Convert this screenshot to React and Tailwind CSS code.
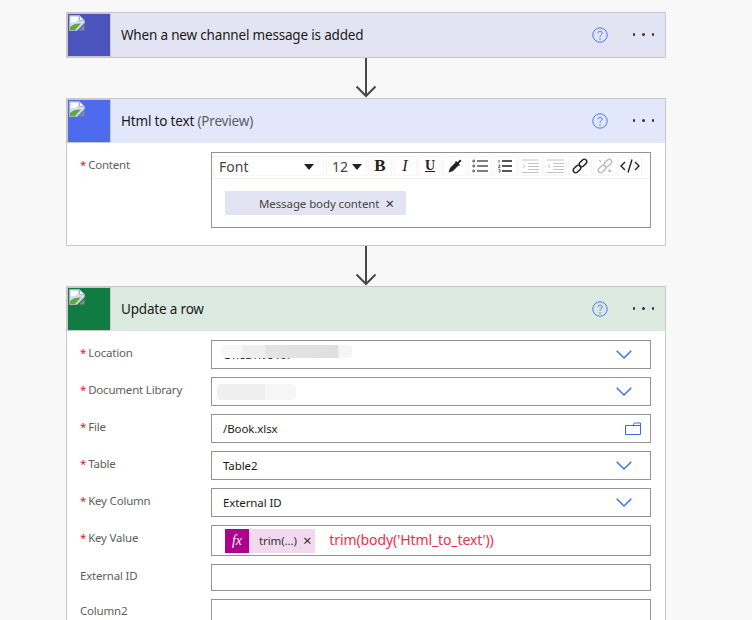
import React from "react";

const Broken = () => (
  <svg width="16" height="16" viewBox="0 0 16 16" className="absolute left-px top-px">
    <path d="M0.5 0.5H10.5L15.5 5.5V8L8 15.5H0.5Z" fill="#cfe0f5" stroke="#b0b0b0" />
    <path d="M10.5 0.5V5.5H15.5Z" fill="#fff" stroke="#b0b0b0" />
    <path d="M2 2h7v3.5H7V7H2z" fill="#fff" />
    <path d="M1 15V12C4 9 8 8 12 8.5L6 15Z" fill="#62a83c" />
    <path d="M10 15.5L15.5 10V15.5Z" fill="#8a8a8a" />
  </svg>
);

const Help = () => (
  <svg width="16" height="16" viewBox="0 0 16 16" fill="none">
    <circle cx="8" cy="8" r="7.2" stroke="#4d76f0" strokeWidth="1" />
    <path d="M5.9 6.2C5.9 3.6 10.2 3.6 10.2 6.1C10.2 7.8 8 7.7 8 9.8" stroke="#4d76f0" strokeWidth="1" />
    <circle cx="8" cy="12" r="0.8" fill="#4d76f0" />
  </svg>
);

const Dots = () => (
  <div className="flex gap-[7px]">
    <span className="w-[2.5px] h-[2.5px] bg-[#333] rounded-full" />
    <span className="w-[2.5px] h-[2.5px] bg-[#333] rounded-full" />
    <span className="w-[2.5px] h-[2.5px] bg-[#333] rounded-full" />
  </div>
);

const Header = ({ tile, bg, children }) => (
  <div className={`flex h-[44px] ${bg}`}>
    <div className="w-[44px] h-[44px] border border-[#c8c8c8] shrink-0">
      <div className={`relative w-[42px] h-[42px] ${tile}`}>
        <Broken />
      </div>
    </div>
    <div className="flex-1 pl-[10px] pt-[12px] text-[13.5px] leading-[20px] text-[#1b1a19] tracking-[-0.18px]">{children}</div>
    <div className="flex items-center h-[42px] pt-px">
      <Help />
      <div className="ml-[25px] mr-[11px] w-[21px]"><Dots /></div>
    </div>
  </div>
);

const Arrow = ({ h }) => (
  <div className="flex justify-center" style={{ height: h }}>
    <svg width="22" height={h} viewBox={`0 0 22 ${h}`} fill="none">
      <path d={`M11 0V${h - 3}M1.5 ${h - 11.5}L11 ${h - 2}L20.5 ${h - 11.5}`} stroke="#484848" strokeWidth="2" />
    </svg>
  </div>
);

const Chevron = () => (
  <svg width="16" height="9" viewBox="0 0 16 9" fill="none">
    <path d="M0.7 0.7L8 8L15.3 0.7" stroke="#3a6cf0" strokeWidth="1.4" />
  </svg>
);

const Folder = () => (
  <svg width="16" height="13" viewBox="0 0 16 13" fill="none">
    <path d="M0.5 12.5V3.5H8L9.5 1H15.5V12.5ZM8 3.5H15.5" stroke="#2f6cf0" strokeWidth="1" />
  </svg>
);

const Row = ({ label, req, h = "h-[29px]", children }) => (
  <div className="flex">
    <div className={`w-[144px] pl-[13px] ${req ? "pt-[4px]" : "pt-[3px]"} text-[11.5px] leading-[18px] text-[#605e5c] tracking-[-0.2px] shrink-0`}>
      {req && <span className="text-[#e8112d] mr-[2px]">*</span>}
      {label}
    </div>
    <div className={`relative w-[440px] ${h} border border-[#949494] bg-white flex items-center pl-[11px] pr-[18px] text-[11.5px] tracking-[-0.1px] text-[#1b1a19] overflow-hidden`}>
      {children}
    </div>
  </div>
);

const TB = ({ w = "w-[24px]", children }) => (
  <div className={`${w} h-[20px] rounded-[2px] border border-[#f6f6f6] flex items-center justify-center shrink-0`}>{children}</div>
);

const ic = { fill: "none", stroke: "#222", strokeWidth: 1.3 };

const Toolbar = () => (
  <div className="flex items-center gap-px h-[26px] pl-px border-b border-[#f1f1f1] text-[#444]">
    <div className="w-[111px] h-[20px] border border-[#f6f6f6] flex items-center justify-between pl-[5px] pr-[9px] text-[14px] leading-none pt-[2px] shrink-0">
      <span>Font</span>
      <span className="w-0 h-0 border-x-[5px] border-x-transparent border-t-[6px] border-t-[#222]" />
    </div>
    <div className="w-[41px] ml-px h-[20px] border border-[#f6f6f6] flex items-center justify-between pl-[5px] pr-[4px] text-[14px] leading-none pt-[2px] shrink-0">
      <span>12</span>
      <span className="w-0 h-0 border-x-[5px] border-x-transparent border-t-[6px] border-t-[#222]" />
    </div>
    <TB><span className="font-bold text-[17px] text-[#222] font-['Liberation_Serif',serif]">B</span></TB>
    <TB><span className="italic text-[16px] text-[#222] font-['Liberation_Serif',serif]">I</span></TB>
    <TB><span className="underline text-[14px] font-semibold text-[#222] font-['Liberation_Serif',serif]">U</span></TB>
    <TB>
      <svg width="14" height="14" viewBox="0 0 14 14"><path d="M0.5 13.5L2 9L8 3L11 6L5 12Z" fill="#222" /><path d="M8 2L9.5 3.2L11.5 1C12.5 0.2 13.8 1.5 13 2.5L10.8 4.5L12 6L11 7L7 3Z" fill="#222" /></svg>
    </TB>
    <TB>
      <svg width="16" height="14" viewBox="0 0 16 14" {...ic}>
        <circle cx="1.7" cy="2" r="1" strokeWidth="0.8" /><circle cx="1.7" cy="7" r="1" strokeWidth="0.8" /><circle cx="1.7" cy="12" r="1" strokeWidth="0.8" />
        <path d="M5 2H16M5 7H16M5 12H16" stroke="#555" />
      </svg>
    </TB>
    <TB>
      <svg width="14" height="14" viewBox="0 0 14 14" {...ic}>
        <path d="M1 1V3.5M0.5 6H2L0.5 8.5H2.2M0.5 10.5H2V13H0.5" strokeWidth="0.7" />
        <path d="M4 2H14M4 7H14M4 12H14" strokeWidth="1.4" />
      </svg>
    </TB>
    <TB>
      <svg width="17" height="14" viewBox="0 0 17 14" fill="none" stroke="#c4c4c4">
        <path d="M0 1H17M6 4.5H17M6 7.5H17M6 10.5H17M0 13.5H17" /><path d="M1 5.5L3 7.2L1 9" />
      </svg>
    </TB>
    <TB>
      <svg width="17" height="14" viewBox="0 0 17 14" fill="none" stroke="#c4c4c4">
        <path d="M0 1H17M6 4.5H17M6 7.5H17M6 10.5H17M0 13.5H17" /><path d="M3 5.5L1 7.2L3 9" />
      </svg>
    </TB>
    <TB>
      <svg width="16" height="16" viewBox="0 0 16 16" fill="none" stroke="#222" strokeWidth="1.2">
        <rect x="-3.5" y="-2" width="7" height="4" rx="2" transform="translate(5 11) rotate(-45) scale(1.25)" />
        <rect x="-3.5" y="-2" width="7" height="4" rx="2" transform="translate(11 5) rotate(-45) scale(1.25)" />
      </svg>
    </TB>
    <TB>
      <svg width="16" height="16" viewBox="0 0 16 16" fill="none" stroke="#bdbdbd" strokeWidth="1.2">
        <rect x="-3.5" y="-2" width="7" height="4" rx="2" transform="translate(5 11) rotate(-45) scale(1.25)" />
        <rect x="-3.5" y="-2" width="7" height="4" rx="2" transform="translate(11 5) rotate(-45) scale(1.25)" />
        <path d="M2 2L4 4M12 12L14 14M12 14V12H14" />
      </svg>
    </TB>
    <TB>
      <svg width="20" height="14" viewBox="0 0 20 14" fill="none" stroke="#222" strokeWidth="1.4">
        <path d="M5 3L1 7L5 11M15 3L19 7L15 11M12 0.5L8 13.5" />
      </svg>
    </TB>
  </div>
);

export default function App() {
  return (
    <div className="w-[752px] h-[620px] overflow-hidden bg-[#f8f8f8] pt-[12px] pl-[66px] font-['Noto_Sans','Open_Sans',sans-serif]">
      <div className="w-[600px]">
        <div className="border border-[#c8c8c8] bg-[#e3e4f3]">
          <Header tile="bg-[#4b53bc]" bg="bg-[#e3e4f3]">When a new channel message is added</Header>
        </div>
        <Arrow h={40} />
        <div className="border border-[#c8c8c8] bg-white h-[148px]">
          <Header tile="bg-[#4f6bed]" bg="bg-[#e2e7fc]">
            Html to text <span className="text-[#605e5c]">(Preview)</span>
          </Header>
          <div className="flex pt-[9px]">
            <div className="w-[144px] pl-[13px] pt-[4px] text-[11.5px] leading-[18px] text-[#605e5c] tracking-[-0.2px] shrink-0">
              <span className="text-[#e8112d] mr-[2px]">*</span>Content
            </div>
            <div className="w-[440px] h-[76px] border border-[#949494] bg-white">
              <Toolbar />
              <div className="pt-[12px] pl-[13px]">
                <div className="w-[181px] h-[24px] bg-[#e3e4f3] flex items-center pl-[34px] pt-px text-[11.5px] tracking-[-0.1px] text-[#484644]">
                  <span>Message body content</span>
                  <span className="ml-[6px] text-[#333] text-[15px] leading-none">×</span>
                </div>
              </div>
            </div>
          </div>
        </div>
        <Arrow h={40} />
        <div className="border border-[#c8c8c8] bg-white">
          <Header tile="bg-[#107c41]" bg="bg-[#dbeae1]">Update a row</Header>
          <div className="flex flex-col gap-[8px] pt-[9px]">
            <Row label="Location" req>
              <span className="mt-[1px]">OneDrive for</span>
              <div className="absolute left-[10px] top-[4px] w-[130px] h-[13px] rounded-[3px] bg-[linear-gradient(90deg,#f8f8f8_15%,#eeeeee_16%,#eeeeee_33%,#e3e3e3_34%,#e0e0e0_89%,#f6f6f6_90%)]" />
              <div className="ml-auto"><Chevron /></div>
            </Row>
            <Row label="Document Library" req>
              <div className="absolute left-[5px] top-[6px] w-[79px] h-[16px] rounded-[4px] bg-[linear-gradient(90deg,#efefef_60%,#f6f6f6_61%,#f6f6f6_100%)]" />
              <div className="ml-auto"><Chevron /></div>
            </Row>
            <Row label="File" req>
              <span>/Book.xlsx</span>
              <div className="ml-auto -mr-[9px]"><Folder /></div>
            </Row>
            <Row label="Table" req>
              <span>Table2</span>
              <div className="ml-auto"><Chevron /></div>
            </Row>
            <Row label="Key Column" req>
              <span>External ID</span>
              <div className="ml-auto"><Chevron /></div>
            </Row>
            <Row label="Key Value" req h="h-[31px]">
              <div className="flex items-center h-[24px] ml-[2px] bg-[#f2d9ef] shrink-0">
                <div className="w-[24px] h-[24px] bg-[#ad008c] flex items-center justify-center text-white text-[14px] italic font-['Liberation_Serif',serif]">
                  fx
                </div>
                <span className="ml-[10px] text-[#333]">trim(...)</span>
                <span className="ml-[6px] mr-[4px] text-[15px] leading-none text-[#333]">×</span>
              </div>
              <span className="ml-[14px] text-[14px] text-[#ee3048] leading-none -mt-[2px]">trim(body('Html_to_text'))</span>
            </Row>
            <Row label="External ID" h="h-[27px]" />
            <Row label="Column2" h="h-[27px]" />
          </div>
        </div>
      </div>
    </div>
  );
}
